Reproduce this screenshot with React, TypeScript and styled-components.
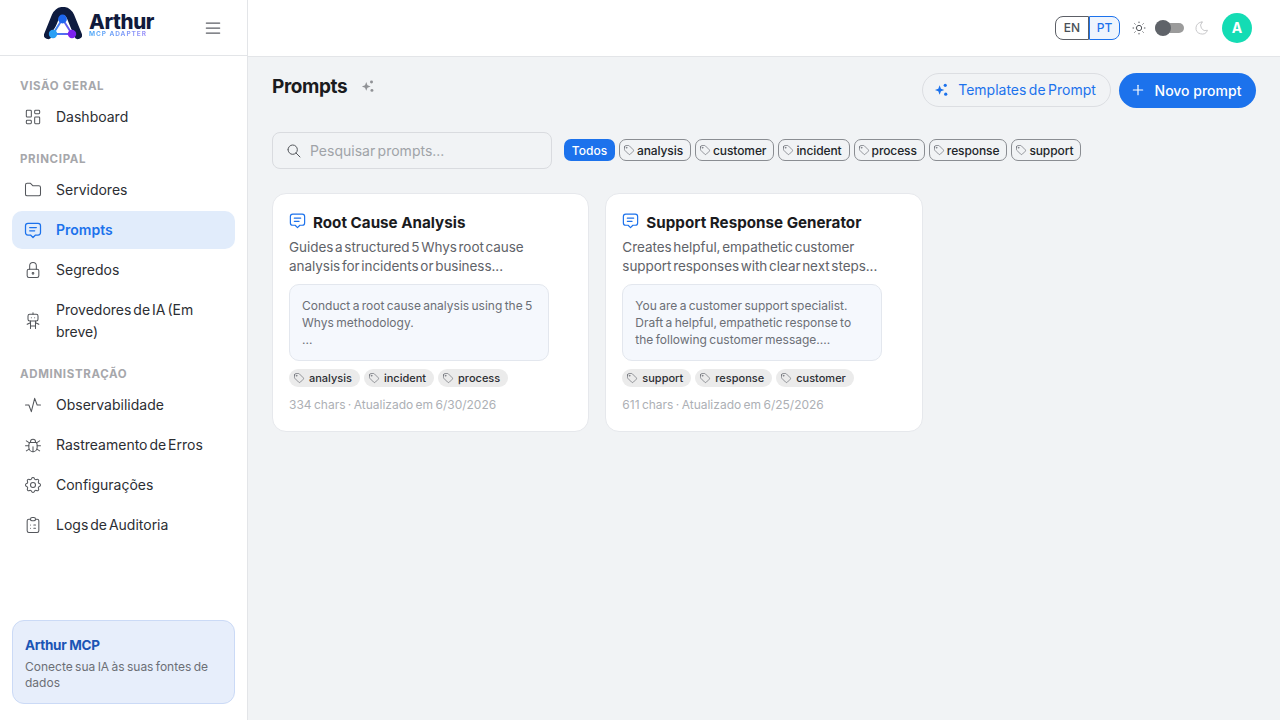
import styled, { createGlobalStyle } from "styled-components";
import {
  TbActivity,
  TbBug,
  TbClipboardList,
  TbFolder,
  TbLayoutDashboard,
  TbLock,
  TbMenu2,
  TbMessage2,
  TbMoon,
  TbPlus,
  TbRobot,
  TbSearch,
  TbSettings,
  TbSun,
  TbTag,
} from "react-icons/tb";

const GlobalStyle = createGlobalStyle`
  * { box-sizing: border-box; }
  html, body { margin: 0; height: 100%; }
  body {
    font-family: Inter, "Noto Sans", sans-serif;
    background: #f1f3f5;
    color: #212529;
    overflow: hidden;
  }
`;

const Shell = styled.div`
  display: flex;
  width: 1280px;
  height: 720px;
`;

const Sidebar = styled.aside`
  width: 248px;
  flex-shrink: 0;
  display: flex;
  flex-direction: column;
  background: #fff;
  border-right: 1px solid #e3e5e8;
`;

const Brand = styled.div`
  height: 56px;
  flex-shrink: 0;
  display: flex;
  align-items: center;
  justify-content: space-between;
  padding: 0 24px 0 44px;
  border-bottom: 1px solid #e3e5e8;
  color: #5c5f66;
`;

const LogoRow = styled.div`
  display: flex;
  align-items: center;
  gap: 7px;
  margin-bottom: 8px;
`;

const LogoText = styled.div`
  display: flex;
  flex-direction: column;
  margin-top: 4px;
`;

const LogoName = styled.span`
  font-size: 20.5px;
  line-height: 17px;
  font-weight: 800;
  color: #101a3c;
  letter-spacing: -0.4px;
`;

const LogoSub = styled.span`
  font-size: 6.5px;
  line-height: 8px;
  font-weight: 700;
  letter-spacing: 0.95px;
  background: linear-gradient(90deg, #4aa8f7, #a58bf8);
  -webkit-background-clip: text;
  background-clip: text;
  color: transparent;
`;

const Nav = styled.nav`
  flex: 1;
  padding: 9px 12px 0;
  display: flex;
  flex-direction: column;
`;

const SectionLabel = styled.div`
  height: 16px;
  margin: 13px 0 4px;
  padding-left: 8px;
  font-size: 11.5px;
  line-height: 16px;
  font-weight: 700;
  letter-spacing: 0.65px;
  color: #a6a7ab;
`;

const NavItem = styled.div<{ $active?: boolean }>`
  display: flex;
  align-items: center;
  gap: 13px;
  min-height: 38px;
  margin-bottom: 2px;
  padding: 8px 12px;
  border-radius: 10px;
  font-size: 14px;
  line-height: 22px;
  word-spacing: -2px;
  font-weight: ${(props) => (props.$active ? 600 : 400)};
  color: ${(props) => (props.$active ? "#1c72ec" : "#2c2e33")};
  background: ${(props) => (props.$active ? "#e1ecfb" : "transparent")};

  svg {
    flex-shrink: 0;
    margin-left: -1px;
    color: ${(props) => (props.$active ? "#1c72ec" : "#54575c")};
  }
`;

const InfoCard = styled.div`
  margin: 0 12px 16px;
  height: 84px;
  padding: 14px 12px;
  background: #e7eefb;
  border: 1px solid #cbdaf6;
  border-radius: 12px;
`;

const InfoTitle = styled.div`
  font-size: 13.5px;
  line-height: 20px;
  font-weight: 700;
  color: #1b55b5;
  letter-spacing: -0.3px;
`;

const InfoText = styled.div`
  margin-top: 4px;
  font-size: 12px;
  line-height: 16px;
  word-spacing: -1px;
  color: #6c6f76;
`;

const Right = styled.div`
  flex: 1;
  display: flex;
  flex-direction: column;
  min-width: 0;
`;

const Topbar = styled.header`
  height: 57px;
  flex-shrink: 0;
  display: flex;
  align-items: center;
  justify-content: flex-end;
  padding: 0 28px 1px 0;
  background: #fff;
  border-bottom: 1px solid #e3e5e8;
`;

const LangGroup = styled.div`
  display: flex;
  margin-right: 11px;
`;

const LangButton = styled.div<{ $active?: boolean }>`
  height: 24px;
  width: ${(props) => (props.$active ? "31px" : "34px")};
  display: flex;
  align-items: center;
  justify-content: center;
  font-size: 12px;
  font-weight: 500;
  color: ${(props) => (props.$active ? "#1c72ec" : "#495057")};
  background: ${(props) => (props.$active ? "#eef4fd" : "#fff")};
  border: 1px solid ${(props) => (props.$active ? "#1c72ec" : "#5c5f66")};
  border-radius: ${(props) => (props.$active ? "0 8px 8px 0" : "8px 0 0 8px")};
`;

const ThemeSwitch = styled.div`
  display: flex;
  align-items: center;
  gap: 8px;
  margin-right: 12px;
  color: #54575c;
`;

const Track = styled.div`
  position: relative;
  width: 29px;
  height: 10px;
  border-radius: 5px;
  background: #9b9b9b;
`;

const Thumb = styled.div`
  position: absolute;
  left: 0;
  top: -3px;
  width: 16px;
  height: 16px;
  border-radius: 50%;
  background: #5f6369;
`;

const MoonWrap = styled.span`
  display: flex;
  margin-left: 2px;
  color: #c9c9cb;
`;

const Avatar = styled.div`
  width: 30px;
  height: 30px;
  border-radius: 50%;
  display: flex;
  align-items: center;
  justify-content: center;
  background: #14dcb4;
  color: #fff;
  font-size: 14px;
  font-weight: 700;
`;

const Main = styled.main`
  flex: 1;
  padding: 16px 24px;
`;

const PageHeader = styled.div`
  display: flex;
  justify-content: space-between;
  align-items: flex-start;
  height: 59px;
`;

const TitleRow = styled.div`
  display: flex;
  align-items: center;
  gap: 14px;
  height: 26px;
  color: #909296;
`;

const PageTitle = styled.h1`
  margin: 2px 0 0;
  font-size: 19px;
  line-height: 26px;
  font-weight: 700;
  letter-spacing: -0.4px;
  color: #1a1b1e;
`;

const Actions = styled.div`
  display: flex;
  gap: 8px;
`;

const GhostButton = styled.div`
  height: 34px;
  width: 189px;
  padding: 0 3px 1px 0;
  display: flex;
  align-items: center;
  justify-content: center;
  gap: 9px;
  border: 1px solid #dcdee2;
  border-radius: 17px;
  font-size: 14px;
  font-weight: 400;
  word-spacing: -1.5px;
  color: #1c72ec;
`;

const PrimaryButton = styled.div`
  height: 35px;
  width: 137px;
  padding: 0 4px 1px 0;
  display: flex;
  align-items: center;
  justify-content: center;
  gap: 9px;
  border-radius: 18px;
  background: #1c72ec;
  font-size: 14px;
  font-weight: 500;
  color: #fff;
`;

const FilterRow = styled.div`
  display: flex;
  align-items: center;
  height: 37px;
  margin-bottom: 24px;
`;

const SearchBox = styled.div`
  width: 280px;
  height: 37px;
  margin-right: 12px;
  display: flex;
  align-items: center;
  gap: 8px;
  padding: 0 13px;
  border: 1px solid #d9dbdf;
  border-radius: 8px;
  font-size: 14px;
  word-spacing: -1.5px;
  color: #a0a3a8;

  svg {
    color: #54575c;
  }
`;

const ChipList = styled.div`
  display: flex;
  gap: 4px;
  margin-bottom: 1px;
`;

const AllChip = styled.div`
  height: 22px;
  width: 51px;
  display: flex;
  align-items: center;
  justify-content: center;
  border-radius: 7px;
  background: #1c72ec;
  color: #fff;
  font-size: 12px;
  font-weight: 500;
`;

const Chip = styled.div`
  height: 22px;
  display: flex;
  align-items: center;
  gap: 2px;
  padding: 0 7px 0 3px;
  border: 1px solid #8a8d92;
  border-radius: 7px;
  font-size: 12px;
  font-weight: 500;
  letter-spacing: -0.1px;
  color: #212529;

  svg {
    color: #5c5f66;
  }
`;

const CardGrid = styled.div`
  display: grid;
  grid-template-columns: repeat(3, 1fr);
  gap: 16px;
`;

const Card = styled.article`
  height: 239px;
  padding: 16px;
  background: #fff;
  border: 1px solid #e6e8ec;
  border-radius: 14px;
`;

const CardTitleRow = styled.div`
  display: flex;
  align-items: center;
  gap: 6px;
  height: 26px;

  svg {
    color: #1c72ec;
    margin: -6px 0 0 -1px;
  }
`;

const CardTitle = styled.h2`
  margin: 0;
  font-size: 15.2px;
  line-height: 24px;
  font-weight: 700;
  color: #1a1b1e;
`;

const Description = styled.p`
  margin: 2px 0 8px;
  padding-right: 8px;
  font-size: 13.5px;
  line-height: 19px;
  word-spacing: -2px;
  letter-spacing: -0.05px;
  color: #5f6369;
`;

const PreviewBox = styled.div`
  width: 91.7%;
  height: 77px;
  padding: 12px;
  background: #f5f8fd;
  border: 1px solid #e3e7ee;
  border-radius: 10px;
  font-size: 12px;
  line-height: 17px;
  word-spacing: -1px;
  color: #6c6f76;
  white-space: pre-line;
`;

const TagList = styled.div`
  display: flex;
  gap: 4px;
  margin-top: 8px;
`;

const Tag = styled.div`
  height: 18px;
  display: flex;
  align-items: center;
  gap: 4px;
  padding: 0 8px 0 4px;
  border-radius: 9px;
  background: #ebebeb;
  font-size: 11px;
  font-weight: 500;
  color: #2c2e33;

  svg {
    color: #5c5f66;
  }
`;

const Footnote = styled.div`
  margin-top: 9px;
  font-size: 12px;
  line-height: 18px;
  word-spacing: -1px;
  color: #adb0b5;
`;

function ArthurLogo() {
  return (
    <svg width="38" height="33" viewBox="0 0 38 33" fill="none">
      <defs>
        <linearGradient id="tri" x1="5" y1="28" x2="33" y2="28" gradientUnits="userSpaceOnUse">
          <stop stopColor="#2aa0f5" />
          <stop offset="1" stopColor="#7c3aed" />
        </linearGradient>
      </defs>
      <path
        d="M4 28 L11.5 9.5 C15 2 23 2 26.5 9.5 L34 28"
        stroke="#0e1b3f"
        strokeWidth="8"
        strokeLinecap="round"
        strokeLinejoin="round"
      />
      <path d="M18.5 13 L9 27 H28 Z" fill="#fff" stroke="#fff" strokeWidth="4" strokeLinejoin="round" />
      <path d="M18.5 12 L9 27 H28 Z" stroke="url(#tri)" strokeWidth="2" strokeLinejoin="round" />
      <circle cx="18.5" cy="12" r="4.4" fill="#1d66ee" />
      <circle cx="9" cy="27" r="4.2" fill="#2aa0f5" />
      <circle cx="28" cy="27" r="4.2" fill="#7c22f0" />
    </svg>
  );
}

function SparkIcon({ size }: { size: number }) {
  return (
    <svg width={size} height={size} viewBox="0 0 16 16" fill="currentColor">
      <path d="M6 3.5 L7.4 7.1 L11 8.5 L7.4 9.9 L6 13.5 L4.6 9.9 L1 8.5 L4.6 7.1 Z" />
      <circle cx="12" cy="3.5" r="1.7" />
      <circle cx="12.5" cy="13" r="1.7" />
    </svg>
  );
}

const navIcon = { size: 20, strokeWidth: 1.25 };

const prompts = [
  {
    title: "Root Cause Analysis",
    description: "Guides a structured 5 Whys root cause analysis for incidents or business...",
    preview: "Conduct a root cause analysis using the 5 Whys methodology.\n...",
    tags: ["analysis", "incident", "process"],
    footer: "334 chars · Atualizado em 6/30/2026",
  },
  {
    title: "Support Response Generator",
    description: "Creates helpful, empathetic customer support responses with clear next steps...",
    preview: "You are a customer support specialist. Draft a helpful, empathetic response to the following customer message....",
    tags: ["support", "response", "customer"],
    footer: "611 chars · Atualizado em 6/25/2026",
  },
];

const filters = ["analysis", "customer", "incident", "process", "response", "support"];

function App() {
  return (
    <Shell>
      <GlobalStyle />
      <Sidebar>
        <Brand>
          <LogoRow>
            <ArthurLogo />
            <LogoText>
              <LogoName>Arthur</LogoName>
              <LogoSub>MCP ADAPTER</LogoSub>
            </LogoText>
          </LogoRow>
          <TbMenu2 size={20} strokeWidth={1.5} />
        </Brand>
        <Nav>
          <SectionLabel>VISÃO GERAL</SectionLabel>
          <NavItem>
            <TbLayoutDashboard {...navIcon} />
            Dashboard
          </NavItem>
          <SectionLabel>PRINCIPAL</SectionLabel>
          <NavItem>
            <TbFolder {...navIcon} />
            Servidores
          </NavItem>
          <NavItem $active>
            <TbMessage2 size={20} strokeWidth={1.5} />
            Prompts
          </NavItem>
          <NavItem>
            <TbLock {...navIcon} />
            Segredos
          </NavItem>
          <NavItem>
            <TbRobot {...navIcon} />
            Provedores de IA (Em breve)
          </NavItem>
          <SectionLabel>ADMINISTRAÇÃO</SectionLabel>
          <NavItem>
            <TbActivity {...navIcon} />
            Observabilidade
          </NavItem>
          <NavItem>
            <TbBug {...navIcon} />
            Rastreamento de Erros
          </NavItem>
          <NavItem>
            <TbSettings {...navIcon} />
            Configurações
          </NavItem>
          <NavItem>
            <TbClipboardList {...navIcon} />
            Logs de Auditoria
          </NavItem>
        </Nav>
        <InfoCard>
          <InfoTitle>Arthur MCP</InfoTitle>
          <InfoText>Conecte sua IA às suas fontes de dados</InfoText>
        </InfoCard>
      </Sidebar>
      <Right>
        <Topbar>
          <LangGroup>
            <LangButton>EN</LangButton>
            <LangButton $active>PT</LangButton>
          </LangGroup>
          <ThemeSwitch>
            <TbSun size={16} strokeWidth={1.5} />
            <Track>
              <Thumb />
            </Track>
            <MoonWrap>
              <TbMoon size={16} strokeWidth={1.5} />
            </MoonWrap>
          </ThemeSwitch>
          <Avatar>A</Avatar>
        </Topbar>
        <Main>
          <PageHeader>
            <TitleRow>
              <PageTitle>Prompts</PageTitle>
              <SparkIcon size={14} />
            </TitleRow>
            <Actions>
              <GhostButton>
                <SparkIcon size={15} />
                Templates de Prompt
              </GhostButton>
              <PrimaryButton>
                <TbPlus size={16} strokeWidth={1.75} />
                Novo prompt
              </PrimaryButton>
            </Actions>
          </PageHeader>
          <FilterRow>
            <SearchBox>
              <TbSearch size={16} strokeWidth={1.5} />
              Pesquisar prompts...
            </SearchBox>
            <ChipList>
              <AllChip>Todos</AllChip>
              {filters.map((name) => (
                <Chip key={name}>
                  <TbTag size={12} strokeWidth={1.25} />
                  {name}
                </Chip>
              ))}
            </ChipList>
          </FilterRow>
          <CardGrid>
            {prompts.map((prompt) => (
              <Card key={prompt.title}>
                <CardTitleRow>
                  <TbMessage2 size={19} strokeWidth={1.5} />
                  <CardTitle>{prompt.title}</CardTitle>
                </CardTitleRow>
                <Description>{prompt.description}</Description>
                <PreviewBox>{prompt.preview}</PreviewBox>
                <TagList>
                  {prompt.tags.map((tag) => (
                    <Tag key={tag}>
                      <TbTag size={12} strokeWidth={1.25} />
                      {tag}
                    </Tag>
                  ))}
                </TagList>
                <Footnote>{prompt.footer}</Footnote>
              </Card>
            ))}
          </CardGrid>
        </Main>
      </Right>
    </Shell>
  );
}

export default App;
